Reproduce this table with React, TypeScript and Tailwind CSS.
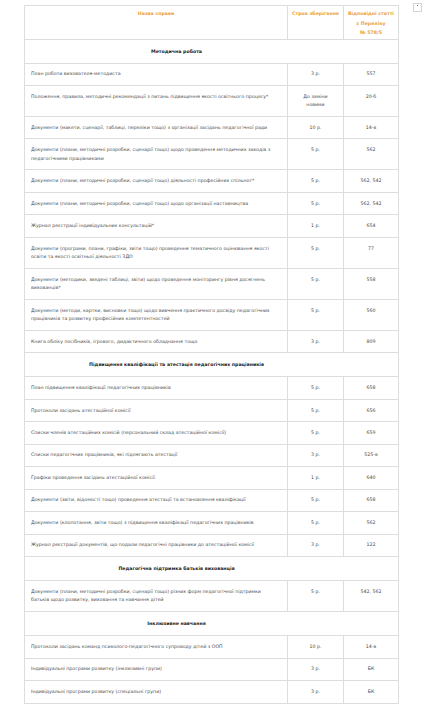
import React from 'react';

type Row = { name: string; term: string; article: string };
type Section = { title: string; rows: Row[] };

const sections: Section[] = [
  {
    title: 'Методична робота',
    rows: [
      { name: 'План роботи вихователя-методиста', term: '3 р.', article: '557' },
      { name: 'Положення, правила, методичні рекомендації з питань підвищення якості освітнього процесу*', term: 'До заміни новими', article: '20-б' },
      { name: 'Документи (макети, сценарії, таблиці, переліки тощо) з організації засідань педагогічної ради', term: '10 р.', article: '14-в' },
      { name: 'Документи (плани, методичні розробки, сценарії тощо) щодо проведення методичних заходів з педагогічними працівниками', term: '5 р.', article: '562' },
      { name: 'Документи (плани, методичні розробки, сценарії тощо) діяльності професійних спільнот*', term: '5 р.', article: '562, 542' },
      { name: 'Документи (плани, методичні розробки, сценарії тощо) щодо організації наставництва', term: '5 р.', article: '562, 542' },
      { name: 'Журнал реєстрації індивідуальних консультацій*', term: '1 р.', article: '654' },
      { name: 'Документи (програми, плани, графіки, звіти тощо) проведення тематичного оцінювання якості освіти та якості освітньої діяльності ЗДО', term: '5 р.', article: '77' },
      { name: 'Документи (методики, зведені таблиці, звіти) щодо проведення моніторингу рівня досягнень вихованців*', term: '5 р.', article: '558' },
      { name: 'Документи (методи, картки, висновки тощо) щодо вивчення практичного досвіду педагогічних працівників та розвитку професійних компетентностей', term: '5 р.', article: '560' },
      { name: 'Книга обліку посібників, ігрового, дидактичного обладнання тощо', term: '3 р.', article: '809' },
    ],
  },
  {
    title: 'Підвищення кваліфікації та атестація педагогічних працівників',
    rows: [
      { name: 'План підвищення кваліфікації педагогічних працівників', term: '5 р.', article: '658' },
      { name: 'Протоколи засідань атестаційної комісії', term: '5 р.', article: '656' },
      { name: 'Списки членів атестаційних комісій (персональний склад атестаційної комісії)', term: '5 р.', article: '659' },
      { name: 'Списки педагогічних працівників, які підлягають атестації', term: '3 р.', article: '525-в' },
      { name: 'Графіки проведення засідань атестаційної комісії', term: '1 р.', article: '640' },
      { name: 'Документи (звіти, відомості тощо) проведення атестації та встановлення кваліфікації', term: '5 р.', article: '658' },
      { name: 'Документи (клопотання, звіти тощо) з підвищення кваліфікації педагогічних працівників', term: '5 р.', article: '562' },
      { name: 'Журнал реєстрації документів, що подали педагогічні працівники до атестаційної комісії', term: '3 р.', article: '122' },
    ],
  },
  {
    title: 'Педагогічна підтримка батьків вихованців',
    rows: [
      { name: 'Документи (плани, методичні розробки, сценарії тощо) різних форм педагогічної підтримки батьків\u00a0щодо розвитку, виховання та навчання дітей', term: '5 р.', article: '542, 562' },
    ],
  },
  {
    title: 'Інклюзивне навчання',
    rows: [
      { name: 'Протоколи засідань команд психолого-педагогічного супроводу дітей з ООП', term: '10 р.', article: '14-в' },
      { name: 'Індивідуальні програми розвитку (інклюзивні групи)', term: '3 р.', article: 'БК' },
      { name: 'Індивідуальні програми розвитку (спеціальні групи)', term: '3 р.', article: 'БК' },
    ],
  },
];

const cell = 'border border-[#dddddd] align-top px-[6px] pt-[6.7px] pb-[6.3px] leading-[8.5px]';
const head = 'border border-[#dddddd] align-top px-[2px] pt-[3px] pb-[1px] leading-[9.5px] text-center font-bold text-[#e9a23b] whitespace-nowrap';

export default function App() {
  return (
    <div className="relative min-h-[707px] bg-white pl-[24px] pt-[5px] font-['DejaVu_Sans',sans-serif] text-[4.7px] text-[#4a4a4a]">
      <table className="w-[374px] table-fixed border-collapse">
        <colgroup>
          <col className="w-[263px]" />
          <col className="w-[56px]" />
          <col className="w-[55px]" />
        </colgroup>
        <thead>
          <tr>
            <th className={head}>Назва справи</th>
            <th className={head}>Строк зберігання</th>
            <th className={head}>
              Відповідні статті
              <br />з Переліку
              <br />№ 578/5
            </th>
          </tr>
        </thead>
        <tbody>
          {sections.map((s) => (
            <React.Fragment key={s.title}>
              <tr>
                <td colSpan={3} className="border border-[#dddddd] pl-[7px] pr-[77px] py-[7px] leading-[9px] text-center font-bold text-[#222222]">
                  {s.title}
                </td>
              </tr>
              {s.rows.map((r, i) => (
                <tr key={i}>
                  <td className={cell}>{r.name}</td>
                  <td className={`${cell} text-center`}>{r.term}</td>
                  <td className={`${cell} text-center`}>{r.article}</td>
                </tr>
              ))}
            </React.Fragment>
          ))}
        </tbody>
      </table>
      <div className="absolute left-[413px] top-[3px] flex h-[9px] w-[9px] items-start justify-center border border-[#d4d4d4] bg-white">
        <span className="mt-[1px] block h-[1px] w-[1px] bg-[#777777]" />
      </div>
    </div>
  );
}
